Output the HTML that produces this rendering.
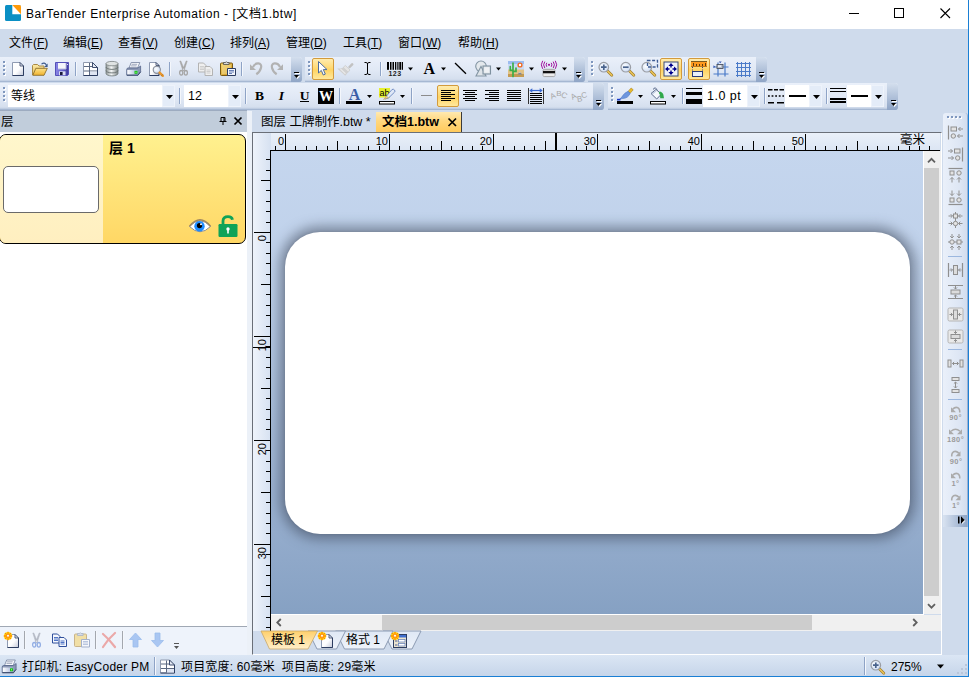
<!DOCTYPE html>
<html lang="zh-CN"><head><meta charset="utf-8"><title>BarTender</title>
<style>
*{box-sizing:border-box;margin:0;padding:0}
html,body{width:969px;height:677px;overflow:hidden}
body{position:relative;background:#cfdbec;font-family:"Liberation Sans","Noto Sans CJK SC",sans-serif;font-size:12px;color:#000}
.abs{position:absolute}
svg{position:absolute;overflow:visible}
#title{left:0;top:0;width:969px;height:29px;background:#fff}
#title .t{left:26px;top:6px;font-size:12px;letter-spacing:.56px;line-height:16px;white-space:nowrap}
#menu{left:0;top:29px;width:969px;height:28px;background:#cfdbec}
#menu span{position:absolute;top:6px;line-height:16px;font-size:12px;white-space:nowrap}
.tb{position:absolute;height:25px;border-radius:0 3px 3px 0;background:linear-gradient(#eaf0fa 0%,#e0e8f5 55%,#d5dfee 89%,#c3d0e4 94%,#98acca 100%)}
.tb .ov{position:absolute;right:0;top:0;width:11px;height:100%;border-radius:0 3px 3px 0;background:linear-gradient(#d4dfee,#8fa5c6)}
#lp-h{left:0;top:110px;width:247px;height:22px;background:#c1cddb;border-top:1px solid #9dabc0}
#lp-b{left:0;top:132px;width:247px;height:495px;background:#fff}
#lp-t{left:0;top:626px;width:247px;height:29px;background:#eef3fb;border-top:1px solid #a0a8b4}
#split{left:247px;top:111px;width:5px;height:544px;background:#ecf1f8}
#doc{left:252px;top:132px;width:690px;height:523px;background:#cfdbec;border-left:1px solid #6a6f78;border-top:1px solid #6a6f78;border-right:1px solid #fff;border-bottom:1px solid #fff}
#hr{left:253px;top:133px;width:687px;height:18px;background:linear-gradient(#eaf0f9,#dbe5f3)}
#vr{left:253px;top:133px;width:18px;height:498px;background:linear-gradient(90deg,#eef3fb,#d6e1f1)}
#canvas{left:271px;top:151px;width:652px;height:463px;background:linear-gradient(#c5d6ee 0%,#bfd1ea 25%,#9db3d2 70%,#86a1c3 100%);overflow:hidden}
#label{left:14px;top:81px;width:625px;height:302px;background:#fff;border-radius:35px;box-shadow:0 0 12px 6px rgba(58,68,86,.5),0 0 3px rgba(58,68,86,.25)}
#vs{left:924px;top:151px;width:17px;height:463px;background:#f0f0f0}
#hs{left:271px;top:615px;width:670px;height:16px;background:#f0f0f0}
.thumb{position:absolute;background:#cdcdcd}
#status{left:0;top:655px;width:969px;height:22px;background:linear-gradient(#dbe6f4,#c6d5ea);border-bottom:1px solid #1a7fd4}
#status span{position:absolute;top:4px;font-size:12px;line-height:16px;white-space:nowrap}
#card{left:-1px;top:134px;width:247px;height:110px;border:1px solid #000;border-radius:7px;background:linear-gradient(#fff18f,#ffd765);overflow:hidden}
#card .l{left:0;top:0;width:103px;height:108px;background:linear-gradient(#fff7cc,#ffefc0)}
#thumb{left:3px;top:166px;width:96px;height:47px;background:#fff;border:1px solid #6a6a6a;border-radius:5px}
#rtb{left:943px;top:113px;width:25px;height:414px;border-radius:3px 3px 0 0;background:linear-gradient(90deg,#eaf0fa,#dde6f4 70%,#d2ddee);border-right:1px solid #9db1d1}
#rtb .ov{left:0;bottom:0;width:24px;height:12px;background:linear-gradient(90deg,#d9e3f1,#8fa5c6)}
#tabA{left:376px;top:112px;width:86px;height:20px;background:linear-gradient(#ffe9b0,#ffd77e 45%,#ffca5c);border-right:1px solid #3a3a3a}
.tt{position:absolute;font-size:12.500px;line-height:16px;white-space:nowrap}
#wb-r{left:968px;top:0;width:1px;height:677px;background:#1a7fd4}
</style></head><body>
<div id="title" class="abs"><span class="abs t">BarTender Enterprise Automation - [文档1.btw]</span></div>
<div id="menu" class="abs">
<span style="left:9px">文件(<u>F</u>)</span><span style="left:63px">编辑(<u>E</u>)</span><span style="left:118px">查看(<u>V</u>)</span><span style="left:174px">创建(<u>C</u>)</span><span style="left:230px">排列(<u>A</u>)</span><span style="left:286px">管理(<u>D</u>)</span><span style="left:343px">工具(<u>T</u>)</span><span style="left:398px">窗口(<u>W</u>)</span><span style="left:458px">帮助(<u>H</u>)</span>
</div>
<div class="tb" style="left:0;top:57px;width:302px"><div class="ov"></div></div>
<div class="tb" style="left:305px;top:57px;width:280px"><div class="ov"></div></div>
<div class="tb" style="left:588px;top:57px;width:179px"><div class="ov"></div></div>
<div class="tb" style="left:0;top:83px;width:604px;height:27px"><div class="ov"></div></div>
<div class="tb" style="left:608px;top:83px;width:290px;height:27px"><div class="ov"></div></div>
<div id="lp-h" class="abs"><span class="abs" style="left:1px;top:3px;font-size:12.5px;line-height:16px">层</span></div>
<div id="lp-b" class="abs"></div>
<div id="card" class="abs"><div class="abs l"></div><span class="abs" style="left:109px;top:5px;font-weight:bold;font-size:14px;line-height:16px">层 1</span></div>
<div id="thumb" class="abs"></div>
<div id="lp-t" class="abs"></div>
<div id="split" class="abs"></div>
<div id="rtb" class="abs"><div class="abs ov"></div></div>
<span class="tt" style="left:261px;top:114px">图层 工牌制作.btw *</span>
<div id="tabA" class="abs"><span class="tt" style="left:6px;top:2px;font-weight:bold">文档1.btw</span></div>

<div id="doc" class="abs"></div>
<div id="hr" class="abs"></div>
<div id="vr" class="abs"></div>
<div id="canvas" class="abs"><div id="label" class="abs"></div></div>
<div class="abs" style="left:271px;top:614px;width:653px;height:1px;background:#fff"></div><div class="abs" style="left:923px;top:151px;width:1px;height:464px;background:#fff"></div>
<div id="vs" class="abs"><div class="thumb" style="left:0px;top:17px;width:15px;height:428px"></div></div>
<div id="hs" class="abs"><div class="thumb" style="left:111px;top:0px;width:430px;height:15px"></div></div>
<div id="status" class="abs"><span style="left:22px;letter-spacing:.25px">打印机: EasyCoder PM</span><span style="left:181px;letter-spacing:.18px">项目宽度: 60毫米&nbsp; 项目高度: 29毫米</span><span style="left:891px">275%</span></div>
<svg class="abs" style="left:0;top:0" width="969" height="677" shape-rendering="crispEdges"><g fill="#000"><rect x="275" y="146" width="1" height="4"/><rect x="285" y="134" width="1" height="16"/><rect x="295" y="146" width="1" height="4"/><rect x="306" y="146" width="1" height="4"/><rect x="316" y="146" width="1" height="4"/><rect x="327" y="146" width="1" height="4"/><rect x="337" y="141" width="1" height="9"/><rect x="347" y="146" width="1" height="4"/><rect x="358" y="146" width="1" height="4"/><rect x="368" y="146" width="1" height="4"/><rect x="379" y="146" width="1" height="4"/><rect x="389" y="134" width="1" height="16"/><rect x="399" y="146" width="1" height="4"/><rect x="410" y="146" width="1" height="4"/><rect x="420" y="146" width="1" height="4"/><rect x="431" y="146" width="1" height="4"/><rect x="441" y="141" width="1" height="9"/><rect x="451" y="146" width="1" height="4"/><rect x="462" y="146" width="1" height="4"/><rect x="472" y="146" width="1" height="4"/><rect x="482" y="146" width="1" height="4"/><rect x="493" y="134" width="1" height="16"/><rect x="503" y="146" width="1" height="4"/><rect x="514" y="146" width="1" height="4"/><rect x="524" y="146" width="1" height="4"/><rect x="534" y="146" width="1" height="4"/><rect x="545" y="141" width="1" height="9"/><rect x="555" y="146" width="1" height="4"/><rect x="566" y="146" width="1" height="4"/><rect x="576" y="146" width="1" height="4"/><rect x="586" y="146" width="1" height="4"/><rect x="597" y="134" width="1" height="16"/><rect x="607" y="146" width="1" height="4"/><rect x="618" y="146" width="1" height="4"/><rect x="628" y="146" width="1" height="4"/><rect x="638" y="146" width="1" height="4"/><rect x="649" y="141" width="1" height="9"/><rect x="659" y="146" width="1" height="4"/><rect x="670" y="146" width="1" height="4"/><rect x="680" y="146" width="1" height="4"/><rect x="690" y="146" width="1" height="4"/><rect x="701" y="134" width="1" height="16"/><rect x="711" y="146" width="1" height="4"/><rect x="722" y="146" width="1" height="4"/><rect x="732" y="146" width="1" height="4"/><rect x="742" y="146" width="1" height="4"/><rect x="753" y="141" width="1" height="9"/><rect x="763" y="146" width="1" height="4"/><rect x="774" y="146" width="1" height="4"/><rect x="784" y="146" width="1" height="4"/><rect x="794" y="146" width="1" height="4"/><rect x="805" y="134" width="1" height="16"/><rect x="815" y="146" width="1" height="4"/><rect x="825" y="146" width="1" height="4"/><rect x="836" y="146" width="1" height="4"/><rect x="846" y="146" width="1" height="4"/><rect x="857" y="141" width="1" height="9"/><rect x="867" y="146" width="1" height="4"/><rect x="877" y="146" width="1" height="4"/><rect x="888" y="146" width="1" height="4"/><rect x="898" y="146" width="1" height="4"/><rect x="909" y="146" width="1" height="4"/><rect x="919" y="146" width="1" height="4"/><rect x="929" y="146" width="1" height="4"/><rect x="266" y="159" width="4" height="1"/><rect x="266" y="170" width="4" height="1"/><rect x="261" y="180" width="9" height="1"/><rect x="266" y="190" width="4" height="1"/><rect x="266" y="201" width="4" height="1"/><rect x="266" y="211" width="4" height="1"/><rect x="266" y="222" width="4" height="1"/><rect x="254" y="232" width="16" height="1"/><rect x="266" y="242" width="4" height="1"/><rect x="266" y="253" width="4" height="1"/><rect x="266" y="263" width="4" height="1"/><rect x="266" y="274" width="4" height="1"/><rect x="261" y="284" width="9" height="1"/><rect x="266" y="294" width="4" height="1"/><rect x="266" y="305" width="4" height="1"/><rect x="266" y="315" width="4" height="1"/><rect x="266" y="326" width="4" height="1"/><rect x="254" y="336" width="16" height="1"/><rect x="266" y="346" width="4" height="1"/><rect x="266" y="357" width="4" height="1"/><rect x="266" y="367" width="4" height="1"/><rect x="266" y="378" width="4" height="1"/><rect x="261" y="388" width="9" height="1"/><rect x="266" y="398" width="4" height="1"/><rect x="266" y="409" width="4" height="1"/><rect x="266" y="419" width="4" height="1"/><rect x="266" y="429" width="4" height="1"/><rect x="254" y="440" width="16" height="1"/><rect x="266" y="450" width="4" height="1"/><rect x="266" y="461" width="4" height="1"/><rect x="266" y="471" width="4" height="1"/><rect x="266" y="481" width="4" height="1"/><rect x="261" y="492" width="9" height="1"/><rect x="266" y="502" width="4" height="1"/><rect x="266" y="513" width="4" height="1"/><rect x="266" y="523" width="4" height="1"/><rect x="266" y="533" width="4" height="1"/><rect x="254" y="544" width="16" height="1"/><rect x="266" y="554" width="4" height="1"/><rect x="266" y="565" width="4" height="1"/><rect x="266" y="575" width="4" height="1"/><rect x="266" y="585" width="4" height="1"/><rect x="261" y="596" width="9" height="1"/><rect x="266" y="606" width="4" height="1"/><rect x="266" y="617" width="4" height="1"/><rect x="266" y="627" width="4" height="1"/><rect x="271" y="150" width="669" height="1"/><rect x="270" y="150" width="1" height="481"/><rect x="555" y="133" width="2" height="17"/><rect x="253" y="347" width="17" height="1"/></g><g font-family="Liberation Sans, sans-serif" font-size="11" fill="#000"><text x="284" y="145" text-anchor="end">0</text><text x="388" y="145" text-anchor="end">10</text><text x="492" y="145" text-anchor="end">20</text><text x="596" y="145" text-anchor="end">30</text><text x="700" y="145" text-anchor="end">40</text><text x="804" y="145" text-anchor="end">50</text><text transform="translate(266,235) rotate(-90)" text-anchor="end">0</text><text transform="translate(266,339) rotate(-90)" text-anchor="end">10</text><text transform="translate(266,443) rotate(-90)" text-anchor="end">20</text><text transform="translate(266,547) rotate(-90)" text-anchor="end">30</text></g><text x="900" y="144" font-family="Liberation Sans, Noto Sans CJK SC, sans-serif" font-size="12.500" fill="#000">毫米</text></svg>
<svg class="abs" style="left:0;top:0" width="969" height="677"><defs>
<linearGradient id="gpage" x1="0" y1="0" x2="1" y2="1"><stop offset="0" stop-color="#fff"/><stop offset=".55" stop-color="#fdfdfe"/><stop offset="1" stop-color="#c3c8d8"/></linearGradient>
<linearGradient id="gfold" x1="0" y1="0" x2="0" y2="1"><stop offset="0" stop-color="#fde38a"/><stop offset="1" stop-color="#f0b22e"/></linearGradient>
<linearGradient id="gfoldb" x1="0" y1="0" x2="0" y2="1"><stop offset="0" stop-color="#fbe9a6"/><stop offset="1" stop-color="#e9c35e"/></linearGradient>
<linearGradient id="gsave" x1="0" y1="0" x2="1" y2="0"><stop offset="0" stop-color="#8a86e6"/><stop offset=".5" stop-color="#6a66cf"/><stop offset="1" stop-color="#3d399c"/></linearGradient>
<linearGradient id="gcyl" x1="0" y1="0" x2="1" y2="0"><stop offset="0" stop-color="#8f9696"/><stop offset=".45" stop-color="#f4f6f6"/><stop offset="1" stop-color="#7c8484"/></linearGradient>
<linearGradient id="gprn" x1="0" y1="0" x2="1" y2="0"><stop offset="0" stop-color="#fff"/><stop offset="1" stop-color="#9fb0d8"/></linearGradient>
<linearGradient id="gbtn" x1="0" y1="0" x2="0" y2="1"><stop offset="0" stop-color="#ffedb2"/><stop offset=".4" stop-color="#ffdc7c"/><stop offset=".55" stop-color="#ffd463"/><stop offset="1" stop-color="#ffe9a0"/></linearGradient>
<linearGradient id="gclip" x1="0" y1="0" x2="1" y2="1"><stop offset="0" stop-color="#f7d66a"/><stop offset="1" stop-color="#c98f1c"/></linearGradient>
<radialGradient id="glens" cx=".4" cy=".4" r=".7"><stop offset="0" stop-color="#fff"/><stop offset="1" stop-color="#c4d6f2"/></radialGradient>
</defs><rect x="4" y="62" width="2" height="2" fill="#fff"/><rect x="3" y="61" width="2" height="2" fill="#7f97be"/><rect x="4" y="66" width="2" height="2" fill="#fff"/><rect x="3" y="65" width="2" height="2" fill="#7f97be"/><rect x="4" y="70" width="2" height="2" fill="#fff"/><rect x="3" y="69" width="2" height="2" fill="#7f97be"/><rect x="4" y="74" width="2" height="2" fill="#fff"/><rect x="3" y="73" width="2" height="2" fill="#7f97be"/><g transform="translate(12,62)"><path d="M.5 .5h7.5l3.5 3.5v9.5h-11z" fill="url(#gpage)" stroke="#8f9bb3"/><path d="M11.5 4v9.5h-11" fill="none" stroke="#2d3d60"/><path d="M8 .5v3.5h3.5z" fill="#e8ecf5" stroke="#2d3d60" stroke-width=".8"/></g><g transform="translate(32,62)"><path d="M.5 13V3.5l1-1h4l1.5 1.5h5v3" fill="url(#gfoldb)" stroke="#a98a46"/><path d="M.8 13.3l3-7h11.5l-3.3 7z" fill="url(#gfold)" stroke="#8c6d2a" stroke-width=".9"/><path d="M9.5 2.2q3-2.6 5 1" fill="none" stroke="#3c5a8e" stroke-width="1.1"/><path d="M15.6 1.4v3.6h-3.3z" fill="#3c5a8e"/></g><g transform="translate(55,62)"><path d="M.5 .5h13v12l-1 1h-12z" fill="url(#gsave)" stroke="#5450b8"/><rect x="3" y="1" width="8" height="6" fill="#f4f5fb"/><path d="M3 7h8M11 1v6" stroke="#b9bddc" fill="none"/><rect x="4" y="9.3" width="6.5" height="4" fill="#d9dcef"/><rect x="5" y="10" width="2.6" height="3" fill="#1a1a3a"/><rect x="12" y="2" width="1" height="1" fill="#dcdcff"/></g><rect x="75" y="62" width="1" height="14" fill="#8ea3c6"/><rect x="76" y="62" width="1" height="14" fill="#f4f7fc"/><g transform="translate(83,62)"><path d="M.5 .5h9l5 5v8h-14z" fill="#fff" stroke="#8e99ad"/><path d="M14.5 5.5v8h-14" fill="none" stroke="#2d3d60"/><path d="M1 4.5h8M1 9h13M6.5 1v12" stroke="#5b6880" fill="none"/><path d="M9.5 .5v5h5z" fill="#e4e9f4" stroke="#2d3d60" stroke-width=".9"/><path d="M7 9.5h7v3.5h-7z" fill="#dfe5f2"/></g><g transform="translate(105.5,61)"><path d="M.5 2.5v10a6 2.4 0 0 0 12 0v-10z" fill="url(#gcyl)" stroke="#6f7878" stroke-width=".8"/><ellipse cx="6.5" cy="2.6" rx="6" ry="2.2" fill="#dfe3e3" stroke="#7c8484" stroke-width=".8"/><path d="M.5 6a6 2.4 0 0 0 12 0M.5 9.5a6 2.4 0 0 0 12 0" fill="none" stroke="#6a7373" stroke-width=".9"/></g><g transform="translate(126,62)"><path d="M3 6l2.200-5.500h8.600l-2.200 5.500z" fill="#f5f7fb" stroke="#76839f" stroke-width=".8"/><path d="M5.600 2.300h5.600M5 3.900h5.600" stroke="#9aa3b8" stroke-width=".9"/><path d="M.7 7.600q0-1.600 1.600-1.600h9.700l2.600-2v5.800l-2.600 3.400h-11.300z" fill="#8b98b4" stroke="#55648a" stroke-width=".8"/><path d="M1.300 8h10.500v4.600h-10.500z" fill="url(#gprn)"/><rect x="8.500" y="8.800" width="3" height="3" fill="#16c416"/><rect x="9.500" y="9.800" width="1" height="1" fill="#b4ff8a"/><path d="M1 13.200h11l2.600-3.400" fill="none" stroke="#3a4a6c" stroke-width="1"/></g><g transform="translate(149,62)"><path d="M.5 .5h6.5l3 3v10h-9.5z" fill="url(#gpage)" stroke="#8f9bb3"/><path d="M10 3.5v10h-9.5" fill="none" stroke="#2d3d60"/><path d="M7 .5v3h3z" fill="#e8ecf5" stroke="#2d3d60" stroke-width=".8"/><circle cx="7.8" cy="7.8" r="3.6" fill="url(#glens)" stroke="#8a8f99" stroke-width="1.1"/><path d="M10.6 10.6l3.2 3.2" stroke="#e8962c" stroke-width="2.4" stroke-linecap="round"/><path d="M12.4 13.9l1.5-1.5" stroke="#8a5a18" stroke-width=".6"/></g><rect x="169" y="62" width="1" height="14" fill="#8ea3c6"/><rect x="170" y="62" width="1" height="14" fill="#f4f7fc"/><g transform="translate(179,61)"><path d="M.8 0l1 0 3.900 9.500h-1.800zM8.200 0l-1 0-3.900 9.500h1.800z" fill="#a6a6a6" stroke="#a6a6a6" stroke-width=".6"/><ellipse cx="2.200" cy="11.800" rx="1.600" ry="2.300" fill="none" stroke="#a6a6a6" stroke-width="1.300"/><ellipse cx="6.800" cy="11.800" rx="1.600" ry="2.300" fill="none" stroke="#a6a6a6" stroke-width="1.300"/></g><g transform="translate(198,62.5)"><path d="M.5 .5h5l2.5 2.5v6.500h-7.500z" fill="#efefef" stroke="#b3b3b3"/><path d="M2 4h4M2 5.500h4M2 7h4" stroke="#c6c6c6" stroke-width=".8"/><g transform="translate(6.500,3.500)"><path d="M.5 .5h5l2.5 2.5v6.500h-7.500z" fill="#efefef" stroke="#b3b3b3"/><path d="M2 4h4M2 5.500h4M2 7h4" stroke="#c6c6c6" stroke-width=".8"/></g></g><g transform="translate(220,61)"><rect x=".5" y="2" width="12" height="12.500" rx="1" fill="url(#gclip)" stroke="#7a5a12"/><rect x="2" y="4" width="9" height="9" fill="#f2d88a" opacity=".6"/><path d="M3.500 3.500v-2h2q.8-1.700 1.600 0h2v2z" fill="#d9d9d9" stroke="#4d4d4d" stroke-width=".8"/><path d="M7.500 7.500h8v7h-8z" fill="#f2f5fb" stroke="#2d3d60"/><path d="M9 9.500h5M9 11h5M9 12.500h3" stroke="#5c76b0" stroke-width=".9"/></g><rect x="241" y="62" width="1" height="14" fill="#8ea3c6"/><rect x="242" y="62" width="1" height="14" fill="#f4f7fc"/><g transform="translate(250,62)"><path d="M0 2.200v5.800h6z" fill="#b2b2b2"/><path d="M3 5.200C5 .2 12.500 0 11 5.800 10.300 9 8.500 10.800 6.300 12.200" fill="none" stroke="#b2b2b2" stroke-width="2.200"/></g><g transform="translate(283,62)"><g transform="scale(-1,1)"><path d="M0 2.200v5.800h6z" fill="#b2b2b2"/><path d="M3 5.200C5 .2 12.500 0 11 5.800 10.300 9 8.500 10.800 6.300 12.200" fill="none" stroke="#b2b2b2" stroke-width="2.200"/></g></g><rect x="295" y="73" width="5" height="1" fill="#fff"/><path d="M295 76h5l-2.5 3z" fill="#fff"/><rect x="294" y="72" width="5" height="1" fill="#000"/><path d="M294 75h5l-2.5 3z" fill="#000"/><rect x="309" y="62" width="2" height="2" fill="#fff"/><rect x="308" y="61" width="2" height="2" fill="#7f97be"/><rect x="309" y="66" width="2" height="2" fill="#fff"/><rect x="308" y="65" width="2" height="2" fill="#7f97be"/><rect x="309" y="70" width="2" height="2" fill="#fff"/><rect x="308" y="69" width="2" height="2" fill="#7f97be"/><rect x="309" y="74" width="2" height="2" fill="#fff"/><rect x="308" y="73" width="2" height="2" fill="#7f97be"/><rect x="312.5" y="58.5" width="21" height="21" rx="1.500" fill="url(#gbtn)" stroke="#d39b3c"/><g transform="translate(318,61)"><path d="M.5 .5v11.500l2.800-2.600 2 4.600 2-.9-2-4.500h3.700z" fill="#fff" stroke="#4d6c9e" stroke-width="1" stroke-linejoin="round"/></g><g transform="translate(337,62)"><path d="M11 5l3.200-3.600q1-.8 1.900 0t0 1.900l-3.500 3.300z" fill="#c2c2c2"/><path d="M8.400 3.400l4.600 4.600-1.800 2.200-5-4.800z" fill="#e4e4e4" stroke="#bcbcbc" stroke-width=".5"/><path d="M6.200 5.400l5 4.800-3 3.600-8-7.400 3.600.2z" fill="#d0d0d0"/><path d="M3.500 7l5 4.800" stroke="#e9e9e9" stroke-width="1.200"/></g><g transform="translate(364.5,62)"><path d="M0 .5h2.200M3.800 .5h2.200M0 12.500h2.200M3.800 12.500h2.200M3 .8v11.400M2 1l1 .8 1-.8M2 12l1-.8 1 .8" stroke="#000" stroke-width="1" fill="none"/></g><rect x="380" y="62" width="1" height="14" fill="#8ea3c6"/><rect x="381" y="62" width="1" height="14" fill="#f4f7fc"/><g transform="translate(387,62)"><rect x="0" y="0" width="2" height="7.800" fill="#000"/><rect x="3" y="0" width="1.5" height="7.800" fill="#000"/><rect x="5.5" y="0" width="1.5" height="7.800" fill="#000"/><rect x="8" y="0" width="1.3" height="7.800" fill="#000"/><rect x="10.3" y="0" width="1.2" height="7.800" fill="#000"/><rect x="12.3" y="0" width="2" height="7.800" fill="#000"/><rect x="15" y="0" width="1" height="7.800" fill="#000"/><text x="8" y="14" text-anchor="middle" font-size="7" font-weight="bold" font-family="Liberation Sans, sans-serif" fill="#222" letter-spacing=".4">123</text></g><path d="M408 67.5h5l-2.5 3z" fill="#000"/><text x="429.3" y="74" font-size="16" font-weight="bold" font-family="Liberation Serif, serif" fill="#000" text-anchor="middle">A</text><path d="M441 67.5h5l-2.5 3z" fill="#000"/><g transform="translate(455,63)"><path d="M0 0l11 10.800" stroke="#000" stroke-width="1.300"/></g><g transform="translate(475,60.5)"><circle cx="6" cy="5.800" r="5.300" fill="#e3e8ec" stroke="#8395a3" stroke-width="1.100"/><path d="M1 15.500l5-9.500 5 9.500z" fill="#dde3e8" stroke="#8395a3" stroke-width="1.100"/><rect x="8" y="5.500" width="7.500" height="8" fill="#d9dfe5" stroke="#7f919f" stroke-width="1.100"/><rect x="9.200" y="6.700" width="5" height="5.500" fill="#eef1f4"/></g><path d="M496 67.5h5l-2.5 3z" fill="#000"/><g transform="translate(508,61)"><rect width="16" height="9" fill="#9cbcf0"/><rect y="3" width="16" height="6" fill="#c8daf5"/><rect y="8.500" width="16" height="7.500" fill="#e2c285"/><rect y="13" width="16" height="3" fill="#c59b52"/><path d="M5 15.500v-13.300M2.300 5.500v3.800h2.700M8 7v3.300h-3" stroke="#3cae48" stroke-width="1.700" fill="none" stroke-linecap="round"/><circle cx="12" cy="4" r="1.900" fill="#fff" stroke="#f06a22" stroke-width="1.400"/><path d="M9.500 13.500l2.300-2.800 2.500 2.800z" fill="#7f8796"/><path d="M11.100 11.800l.7-1.100.9 1.100z" fill="#fff"/></g><path d="M529 67.5h5l-2.5 3z" fill="#000"/><g transform="translate(541,61)"><circle cx="8" cy="3.800" r="1.100" fill="#a0109c"/><path d="M5.800 1.800q-1.400 2 0 4M10.200 1.800q1.400 2 0 4M3.800 .6q-2.400 3.200 0 6.400M12.200 .6q2.400 3.200 0 6.400M1.700 -.2q-2.800 4 0 8M14.300 -.2q2.800 4 0 8" fill="none" stroke="#a0109c" stroke-width="1"/><rect x="2" y="8.300" width="12" height="7.300" rx="1.500" fill="#d0d0d0" stroke="#9a9a9a" stroke-width=".8"/><rect x="2" y="10" width="12" height="2.200" fill="#111"/><rect x="2.500" y="13" width="11" height="2" fill="#ececec"/></g><path d="M562 67.5h5l-2.5 3z" fill="#000"/><rect x="577" y="73" width="5" height="1" fill="#fff"/><path d="M577 76h5l-2.5 3z" fill="#fff"/><rect x="576" y="72" width="5" height="1" fill="#000"/><path d="M576 75h5l-2.5 3z" fill="#000"/><rect x="592" y="62" width="2" height="2" fill="#fff"/><rect x="591" y="61" width="2" height="2" fill="#7f97be"/><rect x="592" y="66" width="2" height="2" fill="#fff"/><rect x="591" y="65" width="2" height="2" fill="#7f97be"/><rect x="592" y="70" width="2" height="2" fill="#fff"/><rect x="591" y="69" width="2" height="2" fill="#7f97be"/><rect x="592" y="74" width="2" height="2" fill="#fff"/><rect x="591" y="73" width="2" height="2" fill="#7f97be"/><g transform="translate(598,61)"><path d="M9.300 9.800l4.500 4.500" stroke="#9b7a2c" stroke-width="2.800" stroke-linecap="round"/><path d="M9.300 9.800l4.500 4.500" stroke="#ecc558" stroke-width="1.600" stroke-linecap="round"/><circle cx="5.800" cy="6.200" r="4.800" fill="url(#glens)" stroke="#9a9da4" stroke-width="1.200"/><path d="M3 6.200h5.600M5.800 3.400v5.600" stroke="#48628c" stroke-width="1.700"/></g><g transform="translate(620,61)"><path d="M9.300 9.800l4.500 4.500" stroke="#9b7a2c" stroke-width="2.800" stroke-linecap="round"/><path d="M9.300 9.800l4.500 4.500" stroke="#ecc558" stroke-width="1.600" stroke-linecap="round"/><circle cx="5.800" cy="6.200" r="4.800" fill="url(#glens)" stroke="#9a9da4" stroke-width="1.200"/><path d="M3 6.200h5.600" stroke="#48628c" stroke-width="1.700"/></g><g transform="translate(641,61)"><path d="M9.300 9.800l4.500 4.500" stroke="#9b7a2c" stroke-width="2.800" stroke-linecap="round"/><path d="M9.300 9.800l4.500 4.500" stroke="#ecc558" stroke-width="1.600" stroke-linecap="round"/><circle cx="5.800" cy="6.200" r="4.800" fill="url(#glens)" stroke="#9a9da4" stroke-width="1.200"/><path d="M6.500 -.5h10v6.500h-10z" fill="none" stroke="#3e5c94" stroke-width="1.300" stroke-dasharray="3 1.600"/></g><rect x="660.5" y="58.5" width="21" height="21" rx="1.500" fill="url(#gbtn)" stroke="#d39b3c"/><g transform="translate(663.5,61.5)"><rect x=".5" y=".5" width="14" height="14" fill="#eef1f8" stroke="#3b4a78"/><path d="M7.500 3v3M7.500 9v3M3 7.500h3M9 7.500h3" stroke="#00008b" stroke-width="1.400"/><path d="M7.500 1.500l2.600 3h-5.200zM7.500 13.500l2.600-3h-5.200zM1.500 7.500l3-2.600v5.200zM13.500 7.500l-3-2.600v5.200z" fill="#00008b"/></g><rect x="684" y="62" width="1" height="14" fill="#8ea3c6"/><rect x="685" y="62" width="1" height="14" fill="#f4f7fc"/><rect x="688.5" y="58.5" width="21" height="21" rx="1.500" fill="url(#gbtn)" stroke="#d39b3c"/><g transform="translate(691,61)"><rect x="0" y="0" width="16" height="5" fill="#ff9a1e"/><rect x="0" y="0" width="16" height="1" fill="#7a5a20"/><path d="M2.500 2v3M5.500 3v2M8.500 3v2M11.500 3v2M14.500 2v3" stroke="#5a3c10" stroke-width="1"/><path d="M0 5.500h16" stroke="#c07818" stroke-width="1"/><path d="M1.500 6v9M11.500 6v4" stroke="#2a3a8c" stroke-width="1" stroke-dasharray="1 1.500"/><rect x="1.500" y="10.500" width="10" height="5" fill="#e9effa" stroke="#2a3a7a"/></g><g transform="translate(713.5,61.5)"><path d="M4.500 1v14M11.500 1v14M0 5.500h15M0 12.500h15" stroke="#4a7ac8" stroke-width="1.200"/><rect x="3.500" y="3" width="6" height="4" fill="#b9c0cc" stroke="#4a5260" stroke-width=".9"/><rect x="4.500" y="3.800" width="3" height="1.600" fill="#eef1f6"/><path d="M5.200 0h3l-1.500 1.800zM0 3.800v3l1.800-1.500z" fill="#3858b0"/></g><g transform="translate(736,62)"><rect x="1" y="0" width="1" height="15" fill="#4a7ac8"/><rect x="0" y="1" width="15" height="1" fill="#4a7ac8"/><rect x="5" y="0" width="1" height="15" fill="#4a7ac8"/><rect x="0" y="5" width="15" height="1" fill="#4a7ac8"/><rect x="9" y="0" width="1" height="15" fill="#4a7ac8"/><rect x="0" y="9" width="15" height="1" fill="#4a7ac8"/><rect x="13" y="0" width="1" height="15" fill="#4a7ac8"/><rect x="0" y="13" width="15" height="1" fill="#4a7ac8"/></g><rect x="760" y="73" width="5" height="1" fill="#fff"/><path d="M760 76h5l-2.5 3z" fill="#fff"/><rect x="759" y="72" width="5" height="1" fill="#000"/><path d="M759 75h5l-2.5 3z" fill="#000"/><rect x="4" y="88" width="2" height="2" fill="#fff"/><rect x="3" y="87" width="2" height="2" fill="#7f97be"/><rect x="4" y="92" width="2" height="2" fill="#fff"/><rect x="3" y="91" width="2" height="2" fill="#7f97be"/><rect x="4" y="96" width="2" height="2" fill="#fff"/><rect x="3" y="95" width="2" height="2" fill="#7f97be"/><rect x="4" y="100" width="2" height="2" fill="#fff"/><rect x="3" y="99" width="2" height="2" fill="#7f97be"/><rect x="8" y="85" width="167" height="22" fill="#fff"/><rect x="162.5" y="85.5" width="12" height="21" fill="#e4ecf8" stroke="#eef3fb"/><path d="M166 95h7l-3.5 4z" fill="#000"/><rect x="179" y="88" width="1" height="16" fill="#8ea3c6"/><rect x="180" y="88" width="1" height="16" fill="#f4f7fc"/><rect x="184" y="85" width="57" height="22" fill="#fff"/><rect x="228.5" y="85.5" width="12" height="21" fill="#e4ecf8" stroke="#eef3fb"/><path d="M232 95h7l-3.5 4z" fill="#000"/><rect x="245" y="88" width="1" height="16" fill="#8ea3c6"/><rect x="246" y="88" width="1" height="16" fill="#f4f7fc"/><text x="259.5" y="100" font-size="13.5" font-weight="bold" font-family="Liberation Serif, serif" fill="#000" text-anchor="middle" >B</text><text x="281.5" y="100" font-size="13.5" font-weight="bold" font-family="Liberation Serif, serif" fill="#000" text-anchor="middle" font-style="italic">I</text><text x="304.5" y="100" font-size="13.5" font-weight="bold" font-family="Liberation Serif, serif" fill="#000" text-anchor="middle" >U</text><rect x="300" y="101" width="9" height="1" fill="#000"/><rect x="318" y="88" width="16" height="16" fill="#000"/><text x="326" y="101" font-size="14" font-weight="bold" font-family="Liberation Serif, serif" fill="#fff" text-anchor="middle">W</text><rect x="339" y="88" width="1" height="16" fill="#8ea3c6"/><rect x="340" y="88" width="1" height="16" fill="#f4f7fc"/><text x="354.5" y="99.5" font-size="16" font-weight="bold" font-family="Liberation Serif, serif" fill="#3b5ea6" text-anchor="middle">A</text><rect x="346" y="101" width="16" height="3" fill="#000"/><path d="M367 95h5l-2.5 3z" fill="#000"/><g transform="translate(379,88)"><rect x="0" y="0" width="11" height="9.500" fill="#e6f02e"/><text x="5.400" y="7.800" font-size="9" font-family="Liberation Sans, sans-serif" fill="#000" text-anchor="middle">ab</text><path d="M6 11l1.500-3 5.500-6.500q1.500-.8 2.500.5t0 2.200l-6 5.800z" fill="#dfe8f7" stroke="#5a7ab8" stroke-width=".8"/><path d="M4.500 11.500l3-3.500 1.800 1.800z" fill="#f1d08a" stroke="#b99a50" stroke-width=".5"/><rect x=".5" y="13.500" width="15" height="2.500" fill="#fff" stroke="#000"/></g><path d="M400 95h5l-2.5 3z" fill="#000"/><rect x="411" y="88" width="1" height="16" fill="#8ea3c6"/><rect x="412" y="88" width="1" height="16" fill="#f4f7fc"/><rect x="421" y="95" width="11" height="1" fill="#8c8c8c"/><rect x="437.5" y="85.5" width="21" height="21" rx="1.500" fill="url(#gbtn)" stroke="#d39b3c"/><g transform="translate(441,90)"><rect x="0" y="0" width="14" height="1" fill="#000"/><rect x="0" y="2" width="10" height="1" fill="#000"/><rect x="0" y="4" width="14" height="1" fill="#000"/><rect x="0" y="6" width="10" height="1" fill="#000"/><rect x="0" y="8" width="14" height="1" fill="#000"/><rect x="0" y="10" width="10" height="1" fill="#000"/></g><g transform="translate(463,90)"><rect x="0" y="0" width="14" height="1" fill="#000"/><rect x="2" y="2" width="10" height="1" fill="#000"/><rect x="0" y="4" width="14" height="1" fill="#000"/><rect x="2" y="6" width="10" height="1" fill="#000"/><rect x="0" y="8" width="14" height="1" fill="#000"/><rect x="2" y="10" width="10" height="1" fill="#000"/></g><g transform="translate(485,90)"><rect x="0" y="0" width="14" height="1" fill="#000"/><rect x="4" y="2" width="10" height="1" fill="#000"/><rect x="0" y="4" width="14" height="1" fill="#000"/><rect x="4" y="6" width="10" height="1" fill="#000"/><rect x="0" y="8" width="14" height="1" fill="#000"/><rect x="4" y="10" width="10" height="1" fill="#000"/></g><g transform="translate(507,90)"><rect x="0" y="0" width="14" height="1" fill="#000"/><rect x="0" y="2" width="14" height="1" fill="#000"/><rect x="0" y="4" width="14" height="1" fill="#000"/><rect x="0" y="6" width="14" height="1" fill="#000"/><rect x="0" y="8" width="14" height="1" fill="#000"/><rect x="0" y="10" width="14" height="1" fill="#000"/></g><g transform="translate(528,88)"><rect x="0" y="0" width="1" height="16" fill="#333"/><rect x="15" y="0" width="1" height="16" fill="#333"/><path d="M2.500 2.500h11" stroke="#3a6ad0" stroke-width="1.200"/><path d="M1.300 2.500l3-2.300v4.600zM14.700 2.500l-3-2.300v4.600z" fill="#3a6ad0"/><rect x="2" y="5" width="12" height="1" fill="#000"/><rect x="2" y="7" width="12" height="1" fill="#000"/><rect x="2" y="9" width="12" height="1" fill="#000"/><rect x="2" y="11" width="12" height="1" fill="#000"/><rect x="2" y="13" width="12" height="1" fill="#000"/><rect x="2" y="15" width="12" height="1" fill="#000"/></g><g transform="translate(551,88)"><text transform="translate(0.5,11.5) rotate(-25)" font-size="8" font-family="Liberation Sans, sans-serif" fill="#a8a8a8">A</text><text transform="translate(5.2,7.8) rotate(0)" font-size="8" font-family="Liberation Sans, sans-serif" fill="#a8a8a8">B</text><text transform="translate(9.5,8.5) rotate(25)" font-size="8" font-family="Liberation Sans, sans-serif" fill="#a8a8a8">C</text></g><g transform="translate(572,88)"><text transform="translate(0.5,12) rotate(-30)" font-size="8" font-family="Liberation Sans, sans-serif" fill="#a8a8a8">A</text><text transform="translate(5.5,14) rotate(-10)" font-size="8" font-family="Liberation Sans, sans-serif" fill="#a8a8a8">B</text><text transform="translate(10,10.5) rotate(-15)" font-size="8" font-family="Liberation Sans, sans-serif" fill="#a8a8a8">C</text></g><rect x="597" y="101" width="5" height="1" fill="#fff"/><path d="M597 104h5l-2.5 3z" fill="#fff"/><rect x="596" y="100" width="5" height="1" fill="#000"/><path d="M596 103h5l-2.5 3z" fill="#000"/><rect x="612" y="88" width="2" height="2" fill="#fff"/><rect x="611" y="87" width="2" height="2" fill="#7f97be"/><rect x="612" y="92" width="2" height="2" fill="#fff"/><rect x="611" y="91" width="2" height="2" fill="#7f97be"/><rect x="612" y="96" width="2" height="2" fill="#fff"/><rect x="611" y="95" width="2" height="2" fill="#7f97be"/><rect x="612" y="100" width="2" height="2" fill="#fff"/><rect x="611" y="99" width="2" height="2" fill="#7f97be"/><g transform="translate(617,88)"><path d="M11.200 3.200l3-3.200 2 1.800-3 3.400z" fill="#e9bb2c" stroke="#a8801a" stroke-width=".6"/><path d="M11 3.300l2.200 2q-2 5-7.500 5.200-2 .2-3.200.8 2.500-2 3.500-4t5-4z" fill="#6d96de" stroke="#4a74c4" stroke-width=".6"/><path d="M0 10.800h3.500v1.700h-3.500z" fill="#1a3ac8"/><rect x="0" y="13" width="16" height="3" fill="#000"/></g><path d="M638 95h5l-2.5 3z" fill="#000"/><g transform="translate(650,88)"><path d="M3.500 1.500q0-1.800 1.800-1.500t1.700 3" fill="none" stroke="#5d6e8e" stroke-width="1"/><path d="M1 5.500l5-4 5.500 4.500-4.800 5z" fill="#f5f8fd" stroke="#5d6e8e" stroke-width="1"/><path d="M2.500 5.700l3.600-2.800" stroke="#b9c6dd" stroke-width="1.200"/><path d="M10 3.500q3.500 1 3.600 4.500l.4 2.200h-3.800q.5-3.500-1.500-5.500z" fill="#2fa84a"/><rect x=".5" y="13.500" width="15" height="2.500" fill="#fff" stroke="#000"/></g><path d="M671 95h5l-2.5 3z" fill="#000"/><rect x="682" y="88" width="1" height="16" fill="#8ea3c6"/><rect x="683" y="88" width="1" height="16" fill="#f4f7fc"/><rect x="686" y="88" width="16" height="1" fill="#000"/><rect x="686" y="92" width="16" height="3" fill="#000"/><rect x="686" y="99" width="16" height="5" fill="#000"/><rect x="703" y="85" width="57" height="22" fill="#fff"/><rect x="747.5" y="85.5" width="12" height="21" fill="#e4ecf8" stroke="#eef3fb"/><path d="M751 95h7l-3.5 4z" fill="#000"/><rect x="764" y="88" width="1" height="16" fill="#8ea3c6"/><rect x="765" y="88" width="1" height="16" fill="#f4f7fc"/><g transform="translate(768,88.5)"><path d="M0 1.200h16" stroke="#000" stroke-width="1.600" stroke-dasharray="4.500 1.500 4 1.500 4.500"/><path d="M0 7.500h16" stroke="#000" stroke-width="1.600" stroke-dasharray="1.800 1.800"/><path d="M0 14.300h16" stroke="#000" stroke-width="1.600" stroke-dasharray="6 3 7"/></g><rect x="785" y="85" width="37" height="22" fill="#fff"/><rect x="809.5" y="85.5" width="12" height="21" fill="#e4ecf8" stroke="#eef3fb"/><rect x="789" y="95" width="17" height="2" fill="#000"/><path d="M813 95h7l-3.5 4z" fill="#000"/><rect x="826" y="88" width="1" height="16" fill="#8ea3c6"/><rect x="827" y="88" width="1" height="16" fill="#f4f7fc"/><rect x="830" y="88" width="16" height="1" fill="#000"/><rect x="830" y="91" width="16" height="1" fill="#000"/><rect x="830" y="98" width="16" height="2" fill="#000"/><rect x="830" y="101" width="16" height="2" fill="#000"/><rect x="847" y="85" width="37" height="22" fill="#fff"/><rect x="871.5" y="85.5" width="12" height="21" fill="#e4ecf8" stroke="#eef3fb"/><rect x="851" y="95" width="17" height="2" fill="#000"/><path d="M875 95h7l-3.5 4z" fill="#000"/><rect x="892" y="101" width="5" height="1" fill="#fff"/><path d="M892 104h5l-2.5 3z" fill="#fff"/><rect x="891" y="100" width="5" height="1" fill="#000"/><path d="M891 103h5l-2.5 3z" fill="#000"/><text x="11" y="100" font-size="12" font-family="Liberation Sans, Noto Sans CJK SC, sans-serif">等线</text><text x="188" y="100" font-size="12.500" font-family="Liberation Sans, sans-serif">12</text><text x="707" y="100" font-size="12.500" letter-spacing=".5" font-family="Liberation Sans, sans-serif">1.0 pt</text></svg>
<svg class="abs" style="left:0;top:0" width="969" height="677"><g transform="translate(5,5)"><rect width="16" height="16" rx="1.500" fill="#0a8fc4"/><path d="M7.300 0h7.200q1.500 0 1.500 1.500v7.800h-8.700z" fill="#fff"/><path d="M7.300 0h7.200q1.500 0 1.500 1.500v7.800z" fill="#ff9a0a"/></g><path d="M849 13.500h10" stroke="#000" stroke-width="1"/><rect x="894.500" y="8.500" width="9" height="9" fill="none" stroke="#000" stroke-width="1"/><path d="M940.500 8.500l9.500 9.500M950 8.500l-9.500 9.500" stroke="#000" stroke-width="1.100"/><g transform="translate(219.5,117)"><path d="M1.500 .5h4v4h-4zM4.500 .5v4M0 4.500h7M3.500 5v3" stroke="#000" stroke-width="1" fill="none"/></g><g transform="translate(234.5,117.5)"><path d="M0 0l7 7M7 0l-7 7" stroke="#000" stroke-width="1.7"/></g><g transform="translate(448.5,118.5)"><path d="M0 0l7.5 7.5M7.5 0l-7.5 7.5" stroke="#000" stroke-width="1.7"/></g><g transform="translate(189,218)"><path d="M.500 8.500q10.500-11.500 21 0-10.500 10.500-21 0z" fill="#fff" stroke="#8c8c8c" stroke-width="1"/><path d="M.500 8.200q10.500-13 21 0" fill="none" stroke="#a08860" stroke-width="1.500"/><circle cx="10.500" cy="8.300" r="5.200" fill="#1e8cff"/><circle cx="10.500" cy="7.600" r="2.600" fill="#000"/><circle cx="12" cy="6.300" r="1" fill="#fff"/></g><g transform="translate(218.5,215.5)"><path d="M4.500 9v-3.500q0-4.300 5-4.300 3.800 0 4.500 3" fill="none" stroke="#0fa358" stroke-width="2.800"/><rect x="0" y="8.500" width="19" height="13" rx="1.200" fill="#0fa358"/><circle cx="9.500" cy="13.500" r="1.700" fill="#fff"/><rect x="8.700" y="13.500" width="1.600" height="4.500" fill="#fff"/></g><g transform="translate(7,634)"><path d="M.5 .5h7.5l3.5 3.5v9.5h-11z" fill="url(#gpage)" stroke="#8f9bb3"/><path d="M11.5 4v9.5h-11" fill="none" stroke="#2d3d60"/><path d="M8 .5v3.5h3.5z" fill="#e8ecf5" stroke="#2d3d60" stroke-width=".8"/></g><g transform="translate(4,632)"><circle cx="4" cy="4" r="4.100" fill="#ffe11a"/><path d="M4 -.2v8.400M-.2 4h8.400M1.100 1.100l5.800 5.800M6.900 1.100l-5.800 5.800" stroke="#ff8a00" stroke-width="1.300"/><circle cx="4" cy="4" r="2.300" fill="#ff9a10"/><circle cx="4" cy="3.800" r="1" fill="#fff"/></g><rect x="24" y="631" width="1" height="18" fill="#a3a7ae"/><rect x="25" y="631" width="1" height="18" fill="#f4f7fc"/><g transform="translate(32,633)"><path d="M.8 0l1 0 3.900 9.500h-1.800zM8.200 0l-1 0-3.900 9.500h1.800z" fill="#b4b9c4" stroke="#b4b9c4" stroke-width=".6"/><ellipse cx="2.200" cy="11.800" rx="1.600" ry="2.300" fill="none" stroke="#94afe4" stroke-width="1.300"/><ellipse cx="6.800" cy="11.800" rx="1.600" ry="2.300" fill="none" stroke="#94afe4" stroke-width="1.300"/></g><g transform="translate(52,633.5)"><path d="M.5 .5h5l2.500 2.500v6.500h-7.500z" fill="#f4f7fd" stroke="#2f4f9c"/><path d="M2 4h4M2 5.500h4M2 7h4" stroke="#3f67c0" stroke-width=".9"/><g transform="translate(6.500,3.500)"><path d="M.5 .5h5l2.500 2.500v6.500h-7.500z" fill="#f4f7fd" stroke="#2f4f9c"/><path d="M2 4h4M2 5.500h4M2 7h4" stroke="#3f67c0" stroke-width=".9"/></g></g><g transform="translate(74,632)"><rect x=".5" y="2" width="12" height="12.500" rx="1" fill="#f1dfa6" stroke="#c9b48a"/><path d="M3.500 3.500v-2h2q.8-1.700 1.600 0h2v2z" fill="#d4dbe8" stroke="#a9b4c8" stroke-width=".8"/><path d="M7.500 7.500h8v7.500h-8z" fill="#f6f8fc" stroke="#a3b1cc"/><path d="M9 9.500h5M9 11h5M9 12.500h5" stroke="#b3c1dd" stroke-width=".9"/></g><rect x="95" y="631" width="1" height="18" fill="#a3a7ae"/><rect x="96" y="631" width="1" height="18" fill="#f4f7fc"/><g transform="translate(102,633)"><path d="M1 1q6 5 12 13M13 0q-7 6-12 14" stroke="#eba8a8" stroke-width="2.200" fill="none" stroke-linecap="round"/></g><rect x="122" y="631" width="1" height="18" fill="#a3a7ae"/><rect x="123" y="631" width="1" height="18" fill="#f4f7fc"/><g transform="translate(129,632.5)"><path d="M6.500 .500l6 6.500h-3.500v7.500h-5v-7.500h-3.500z" fill="#a9c6f2" stroke="#9bbcec" stroke-width=".8"/></g><g transform="translate(151,647.5)"><g transform="scale(1,-1)"><path d="M6.500 .500l6 6.500h-3.500v7.500h-5v-7.500h-3.500z" fill="#a9c6f2" stroke="#9bbcec" stroke-width=".8"/></g></g><rect x="174" y="643" width="5" height="1" fill="#555"/><path d="M174 646h5l-2.500 3z" fill="#555"/><g transform="translate(1.5,659.5)"><path d="M3 6l2.200-5.500h8.600l-2.200 5.500z" fill="#f5f7fb" stroke="#76839f" stroke-width=".8"/><path d="M5.600 2.300h5.600M5 3.900h5.600" stroke="#9aa3b8" stroke-width=".9"/><path d="M.7 7.600q0-1.600 1.600-1.600h9.700l2.600-2v5.800l-2.600 3.400h-11.300z" fill="#8b98b4" stroke="#55648a" stroke-width=".8"/><path d="M1.300 8h10.500v4.600h-10.500z" fill="url(#gprn)"/><rect x="8.500" y="8.800" width="3" height="3" fill="#16c416"/><rect x="9.500" y="9.800" width="1" height="1" fill="#b4ff8a"/><path d="M1 13.200h11l2.600-3.400" fill="none" stroke="#3a4a6c" stroke-width="1"/></g><rect x="154" y="657" width="1" height="18" fill="#8ea3c6"/><rect x="155" y="657" width="1" height="18" fill="#f4f7fc"/><g transform="translate(160,659.5)"><path d="M.5 .5h9l5 5v8h-14z" fill="#fff" stroke="#8e99ad"/><path d="M14.5 5.5v8h-14" fill="none" stroke="#2d3d60"/><path d="M1 4.5h8M1 9h13M6.5 1v12" stroke="#5b6880" fill="none"/><path d="M9.5 .5v5h5z" fill="#e4e9f4" stroke="#2d3d60" stroke-width=".9"/><path d="M7 9.5h7v3.5h-7z" fill="#dfe5f2"/></g><rect x="864" y="657" width="1" height="18" fill="#8ea3c6"/><rect x="865" y="657" width="1" height="18" fill="#f4f7fc"/><g transform="translate(870,659)"><path d="M9.300 9.800l4.500 4.500" stroke="#9b7a2c" stroke-width="2.800" stroke-linecap="round"/><path d="M9.300 9.800l4.500 4.500" stroke="#ecc558" stroke-width="1.600" stroke-linecap="round"/><circle cx="5.800" cy="6.200" r="4.800" fill="url(#glens)" stroke="#9a9da4" stroke-width="1.200"/><path d="M3 6.200h5.600M5.800 3.400v5.600" stroke="#48628c" stroke-width="1.700"/></g><path d="M937 664.5h7l-3.5 4z" fill="#000"/><rect x="965" y="664" width="2" height="2" fill="#b9c6da"/><rect x="961" y="668" width="2" height="2" fill="#b9c6da"/><rect x="965" y="668" width="2" height="2" fill="#b9c6da"/><rect x="957" y="672" width="2" height="2" fill="#b9c6da"/><rect x="961" y="672" width="2" height="2" fill="#b9c6da"/><rect x="965" y="672" width="2" height="2" fill="#b9c6da"/><g transform="translate(928,158)"><path d="M0 4.300l3.500-3.500 3.500 3.500" fill="none" stroke="#606060" stroke-width="1.800"/></g><g transform="translate(928,603.5)"><path d="M0 .700l3.500 3.500 3.500-3.500" fill="none" stroke="#606060" stroke-width="1.800"/></g><g transform="translate(276.5,619)"><path d="M4.300 0l-3.500 3.500 3.500 3.500" fill="none" stroke="#606060" stroke-width="1.800"/></g><g transform="translate(912.5,619)"><path d="M.700 0l3.500 3.500-3.500 3.500" fill="none" stroke="#606060" stroke-width="1.800"/></g><defs><linearGradient id="gtab" x1="0" y1="0" x2="0" y2="1"><stop offset="0" stop-color="#ffd06c"/><stop offset="1" stop-color="#ffefca"/></linearGradient><linearGradient id="gtab2" x1="0" y1="0" x2="0" y2="1"><stop offset="0" stop-color="#dfe8f5"/><stop offset="1" stop-color="#eef3fa"/></linearGradient></defs><path d="M383 631l9 18h20l9-18z" fill="url(#gtab2)" stroke="#8c9bb3" stroke-width="1"/><path d="M335.500 631l9 18h39.500l9-18z" fill="url(#gtab2)" stroke="#8c9bb3" stroke-width="1"/><path d="M308 631l9 18h19.500l9-18z" fill="url(#gtab2)" stroke="#8c9bb3" stroke-width="1"/><path d="M261 631l8.500 18h38.500l9.500-18z" fill="url(#gtab)" stroke="#c9a767" stroke-width=".8"/><g transform="translate(321,634)"><path d="M.5 .5h7.5l3.5 3.5v9.5h-11z" fill="url(#gpage)" stroke="#8f9bb3"/><path d="M11.5 4v9.5h-11" fill="none" stroke="#2d3d60"/><path d="M8 .5v3.5h3.5z" fill="#e8ecf5" stroke="#2d3d60" stroke-width=".8"/></g><g transform="translate(318,632)"><circle cx="4" cy="4" r="4.100" fill="#ffe11a"/><path d="M4 -.2v8.400M-.2 4h8.400M1.100 1.100l5.800 5.800M6.900 1.100l-5.800 5.800" stroke="#ff8a00" stroke-width="1.300"/><circle cx="4" cy="4" r="2.300" fill="#ff9a10"/><circle cx="4" cy="3.800" r="1" fill="#fff"/></g><g transform="translate(393,634)"><rect x=".500" y=".500" width="13" height="13" fill="#ece5cf" stroke="#2d3d60"/><rect x="1" y="1" width="12" height="2.500" fill="#3f6fd0"/><rect x="2" y="6.500" width="2.500" height="1" fill="#4a5f9a"/><rect x="5.500" y="5.500" width="6.500" height="2.500" fill="#fff" stroke="#5b7ab8" stroke-width=".7"/><rect x="2" y="10.500" width="2.500" height="1" fill="#4a5f9a"/><rect x="5.500" y="9.500" width="6.500" height="2.500" fill="#fff" stroke="#5b7ab8" stroke-width=".7"/></g><g transform="translate(391,632)"><circle cx="4" cy="4" r="4.100" fill="#ffe11a"/><path d="M4 -.2v8.400M-.2 4h8.400M1.100 1.100l5.800 5.800M6.900 1.100l-5.800 5.800" stroke="#ff8a00" stroke-width="1.300"/><circle cx="4" cy="4" r="2.300" fill="#ff9a10"/><circle cx="4" cy="3.800" r="1" fill="#fff"/></g><rect x="948" y="117" width="2" height="2" fill="#fff"/><rect x="947" y="116" width="2" height="2" fill="#7f97be"/><rect x="952" y="117" width="2" height="2" fill="#fff"/><rect x="951" y="116" width="2" height="2" fill="#7f97be"/><rect x="956" y="117" width="2" height="2" fill="#fff"/><rect x="955" y="116" width="2" height="2" fill="#7f97be"/><rect x="960" y="117" width="2" height="2" fill="#fff"/><rect x="959" y="116" width="2" height="2" fill="#7f97be"/><g transform="translate(948,125.5)"><path d="M.500 0v14" stroke="#8f8f8f" stroke-width="1.200"/><rect x="3" y="1.500" width="5.500" height="4" fill="#e3e3e3" stroke="#8f8f8f"/><circle cx="5.300" cy="10.500" r="2.200" fill="#e3e3e3" stroke="#8f8f8f"/><path d="M10.500 3.500h4.500M10.500 3.500l2-2M10.500 3.500l2 2M9.500 10.500h5.500M9.500 10.500l2-2M9.500 10.500l2 2" stroke="#8f8f8f" stroke-width="1" fill="none"/></g><g transform="translate(963,147.5)"><g transform="scale(-1,1)"><path d="M.500 0v14" stroke="#8f8f8f" stroke-width="1.200"/><rect x="3" y="1.500" width="5.500" height="4" fill="#e3e3e3" stroke="#8f8f8f"/><circle cx="5.300" cy="10.500" r="2.200" fill="#e3e3e3" stroke="#8f8f8f"/><path d="M10.500 3.500h4.500M10.500 3.500l2-2M10.500 3.500l2 2M9.500 10.500h5.500M9.500 10.500l2-2M9.500 10.500l2 2" stroke="#8f8f8f" stroke-width="1" fill="none"/></g></g><g transform="translate(948.5,168)"><path d="M0 .500h14" stroke="#8f8f8f" stroke-width="1.200"/><rect x="1.500" y="3" width="4" height="4" fill="#e3e3e3" stroke="#8f8f8f"/><circle cx="10.500" cy="5" r="2.200" fill="#e3e3e3" stroke="#8f8f8f"/><path d="M3.500 9.500v5M3.500 9.500l-2 2M3.500 9.500l2 2M10.500 9.500v5M10.500 9.500l-2 2M10.500 9.500l2 2" stroke="#8f8f8f" stroke-width="1" fill="none"/></g><g transform="translate(948.5,205)"><g transform="scale(1,-1)"><path d="M0 .500h14" stroke="#8f8f8f" stroke-width="1.200"/><rect x="1.500" y="3" width="4" height="4" fill="#e3e3e3" stroke="#8f8f8f"/><circle cx="10.500" cy="5" r="2.200" fill="#e3e3e3" stroke="#8f8f8f"/><path d="M3.500 9.500v5M3.500 9.500l-2 2M3.500 9.500l2 2M10.500 9.500v5M10.500 9.500l-2 2M10.500 9.500l2 2" stroke="#8f8f8f" stroke-width="1" fill="none"/></g></g><g transform="translate(948.5,212)"><path d="M7 0v16" stroke="#8f8f8f" stroke-width="1"/><rect x="5" y="2" width="4" height="4" fill="#e3e3e3" stroke="#8f8f8f"/><circle cx="7" cy="11.500" r="2.200" fill="#e3e3e3" stroke="#8f8f8f"/><path d="M0 4h4M4 4l-1.800-1.800M4 4l-1.800 1.800M14 4h-4M10 4l1.800-1.800M10 4l1.800 1.800" stroke="#8f8f8f" stroke-width="1" fill="none"/><path d="M0 11.5h4M4 11.5l-1.800-1.800M4 11.5l-1.800 1.800M14 11.5h-4M10 11.5l1.800-1.800M10 11.5l1.800 1.800" stroke="#8f8f8f" stroke-width="1" fill="none"/></g><g transform="translate(948,234)"><path d="M0 8h15" stroke="#8f8f8f" stroke-width="1"/><circle cx="4" cy="8" r="2.200" fill="#e3e3e3" stroke="#8f8f8f"/><rect x="9" y="6" width="4" height="4" fill="#e3e3e3" stroke="#8f8f8f"/><path d="M4 0v4M4 4l-1.800-1.800M4 4l1.800-1.800M4 16v-4M4 12l-1.800 1.800M4 12l1.800 1.800" stroke="#8f8f8f" stroke-width="1" fill="none"/><path d="M11 0v4M11 4l-1.800-1.800M11 4l1.800-1.800M11 16v-4M11 12l-1.800 1.800M11 12l1.800 1.800" stroke="#8f8f8f" stroke-width="1" fill="none"/></g><rect x="948" y="256" width="14" height="1" fill="#9bb7df"/><g transform="translate(948,263)"><path d="M.500 0v14M14.500 0v14" stroke="#8f8f8f" stroke-width="1.200"/><rect x="5.500" y="2.500" width="4" height="9" fill="#dcdcdc" stroke="#8f8f8f"/><path d="M1.500 7h3M4.500 7l-1.600-1.600M4.500 7l-1.600 1.600M13.500 7h-3M10.500 7l1.600-1.600M10.500 7l1.600 1.600" stroke="#8f8f8f" fill="none"/></g><g transform="translate(948,285)"><path d="M0 .500h15M0 13.500h15" stroke="#8f8f8f" stroke-width="1.200"/><rect x="3" y="5" width="9" height="4" fill="#dcdcdc" stroke="#8f8f8f"/><path d="M7.500 1v3M7.500 4l-1.600-1.600M7.500 4l1.600-1.600M7.500 13v-3M7.500 10l-1.600 1.600M7.500 10l1.600 1.600" stroke="#8f8f8f" fill="none"/></g><g transform="translate(948,307.5)"><rect x="0" y=".500" width="15" height="13" rx="1.500" fill="#e9e9e9" stroke="#b5b5b5"/><rect x="5.500" y="2.500" width="4" height="9" fill="#dcdcdc" stroke="#8f8f8f"/><path d="M1.500 7h3M4.500 7l-1.600-1.600M4.500 7l-1.600 1.600M13.500 7h-3M10.500 7l1.600-1.600M10.500 7l1.600 1.600" stroke="#8f8f8f" fill="none"/></g><g transform="translate(948,329.5)"><rect x="0" y=".500" width="15" height="13" rx="1.500" fill="#e9e9e9" stroke="#b5b5b5"/><rect x="3" y="5" width="9" height="4" fill="#dcdcdc" stroke="#8f8f8f"/><path d="M7.500 1v3M7.500 4l-1.600-1.600M7.500 4l1.600-1.600M7.500 13v-3M7.500 10l-1.600 1.600M7.500 10l1.600 1.600" stroke="#8f8f8f" fill="none"/></g><rect x="948" y="349" width="14" height="1" fill="#9bb7df"/><g transform="translate(947.5,359.5)"><rect x=".500" y=".500" width="3" height="7" fill="#e3e3e3" stroke="#8f8f8f"/><rect x="12.500" y=".500" width="3" height="7" fill="#e3e3e3" stroke="#8f8f8f"/><path d="M5 4h6M5 4l1.600-1.600M5 4l1.600 1.600M11 4l-1.600-1.600M11 4l-1.600 1.600" stroke="#8f8f8f" fill="none"/></g><g transform="translate(951.5,377)"><rect x=".500" y=".500" width="7" height="3" fill="#e3e3e3" stroke="#8f8f8f"/><rect x=".500" y="12.500" width="7" height="3" fill="#e3e3e3" stroke="#8f8f8f"/><path d="M4 5v6M4 5l-1.600 1.600M4 5l1.600 1.600M4 11l-1.600-1.600M4 11l1.600-1.600" stroke="#8f8f8f" fill="none"/></g><rect x="948" y="399" width="14" height="1" fill="#9bb7df"/><g transform="translate(955.5,406.5)"><path d="M-4.500 .800v5h5z" fill="#ababab"/><path d="M-2.800 2.600q2.600-2.600 5.300-1.300 2 1.200 1.800 4.700" fill="none" stroke="#ababab" stroke-width="1.500"/><text x="0" y="13.300" font-size="7.500" font-weight="bold" letter-spacing=".4" font-family="Liberation Sans, sans-serif" fill="#9c9c9c" text-anchor="middle">90°</text></g><g transform="translate(955.5,428.5)"><path d="M-6.500 .800v5h5zM6.500 .800v5h-5z" fill="#ababab"/><path d="M-4.500 2.800q4.500-4 9 0" fill="none" stroke="#ababab" stroke-width="1.500"/><text x="0" y="13.300" font-size="7.500" font-weight="bold" letter-spacing=".4" font-family="Liberation Sans, sans-serif" fill="#9c9c9c" text-anchor="middle">180°</text></g><g transform="translate(956,450.5)"><g transform="scale(-1,1)"><path d="M-4.500 .800v5h5z" fill="#ababab"/><path d="M-2.800 2.600q2.600-2.600 5.300-1.300 2 1.200 1.800 4.700" fill="none" stroke="#ababab" stroke-width="1.500"/></g><text x="0" y="13.300" font-size="7.500" font-weight="bold" letter-spacing=".4" font-family="Liberation Sans, sans-serif" fill="#9c9c9c" text-anchor="middle">90°</text></g><g transform="translate(955.5,472.5)"><path d="M-4.500 .800v5h5z" fill="#ababab"/><path d="M-2.800 2.600q2.600-2.600 5.300-1.300 2 1.200 1.800 4.700" fill="none" stroke="#ababab" stroke-width="1.500"/><text x="0" y="13.300" font-size="7.500" font-weight="bold" letter-spacing=".4" font-family="Liberation Sans, sans-serif" fill="#9c9c9c" text-anchor="middle">1°</text></g><g transform="translate(956,494.5)"><g transform="scale(-1,1)"><path d="M-4.500 .800v5h5z" fill="#ababab"/><path d="M-2.800 2.600q2.600-2.600 5.300-1.300 2 1.200 1.800 4.700" fill="none" stroke="#ababab" stroke-width="1.500"/></g><text x="0" y="13.300" font-size="7.500" font-weight="bold" letter-spacing=".4" font-family="Liberation Sans, sans-serif" fill="#9c9c9c" text-anchor="middle">1°</text></g><rect x="958" y="516.500" width="1.500" height="7" fill="#000"/><path d="M961 516.500l3.500 3.500-3.500 3.500z" fill="#000"/><path d="M962 517.500l3.500 3.500-3.500 3.500z" fill="#fff" opacity=".7"/><path d="M961 516.500l3.500 3.500-3.500 3.500z" fill="#000"/></svg>
<span class="tt" style="left:271px;top:632px;font-size:12px">模板 1</span><span class="tt" style="left:346px;top:632px;font-size:12px">格式 1</span>
<div id="wb-r" class="abs"></div>
</body></html>
